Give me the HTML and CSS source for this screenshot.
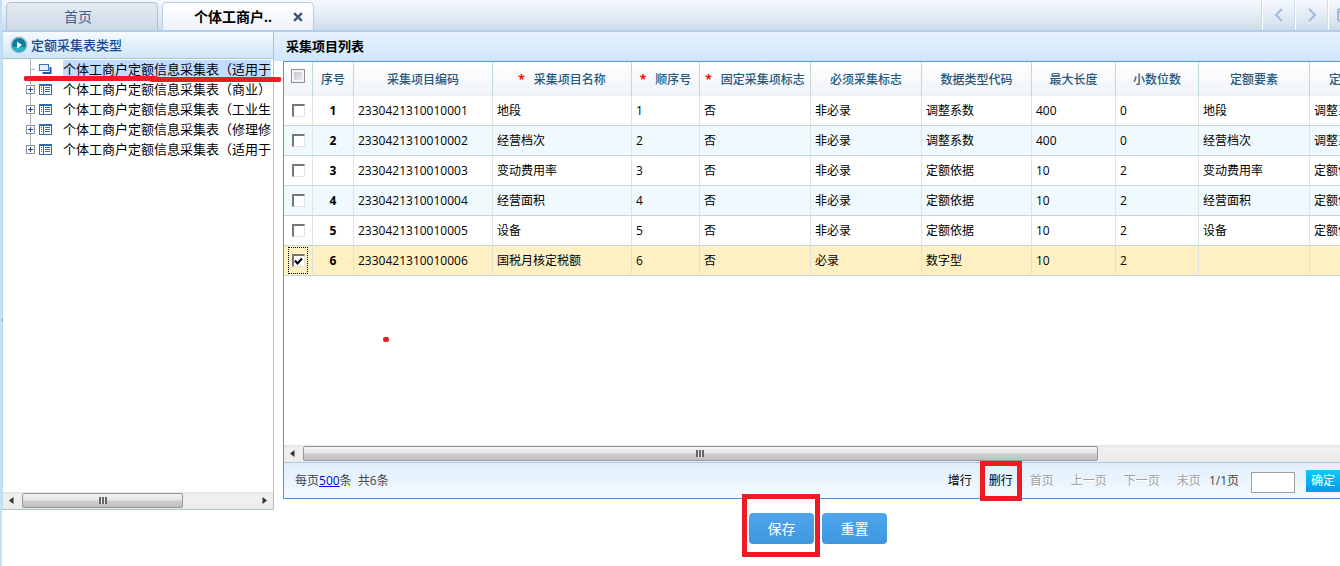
FILE: index.html
```html
<!DOCTYPE html>
<html lang="zh-CN">
<head>
<meta charset="utf-8">
<title>定额采集表</title>
<link rel="stylesheet" href="styles.css">
</head>
<body>
<div class="app">
  <header class="tabbar">
    <nav class="tabs">
      <button class="tab" type="button">首页</button>
      <div class="tab tab-active">
        <span>个体工商户..</span>
        <button class="tab-close" type="button" aria-label="关闭"><svg width="10" height="10" viewBox="0 0 9 9"><path d="M1 1l7 7M8 1l-7 7" stroke="#3a5075" stroke-width="2"/></svg></button>
      </div>
    </nav>
    <div class="tab-nav">
      <button class="nav-btn" type="button" aria-label="向左"><svg width="10" height="14" viewBox="0 0 10 14"><path d="M8 1L2 7l6 6" fill="none" stroke="#98bbdf" stroke-width="2"/></svg></button>
      <button class="nav-btn" type="button" aria-label="向右"><svg width="10" height="14" viewBox="0 0 10 14"><path d="M2 1l6 6-6 6" fill="none" stroke="#98bbdf" stroke-width="2"/></svg></button>
      <button class="nav-btn nav-btn-cut" type="button" aria-label="窗口"><svg width="14" height="14" viewBox="0 0 14 14"><rect x="1" y="1" width="12" height="12" rx="2" fill="none" stroke="#98bbdf" stroke-width="2"/><path d="M1 4h12" stroke="#98bbdf" stroke-width="2"/></svg></button>
    </div>
  </header>

  <div class="workspace">
    <aside class="side">
      <h2 class="side-title">
        <svg width="18" height="18" viewBox="0 0 18 18"><circle cx="9" cy="9" r="8.5" fill="#a9bfcb"/><circle cx="9" cy="9" r="7" fill="#0a7f9e"/><path d="M3 11a6 5 0 0 0 12 0z" fill="#25b4c8"/><path d="M7 5.5v7L12 9z" fill="#fff"/></svg>
        <span>定额采集表类型</span>
      </h2>
      <ul class="tree">
        <li class="node node-first"><span class="elbow"></span><svg class="node-icon" width="13" height="12" viewBox="0 0 13 12"><path d="M3.500 10h8V4" fill="none" stroke="#2457a5" stroke-width="2"/><rect x=".5" y="1.500" width="9" height="6" fill="#e3effc" stroke="#3d72bd"/></svg><span class="node-text selected">个体工商户定额信息采集表（适用于</span></li>
        <li class="node"><svg class="plus" width="9" height="9" viewBox="0 0 9 9"><rect x=".5" y=".5" width="8" height="8" fill="#fff" stroke="#8b929c"/><path d="M2 4.500h5M4.500 2v5" stroke="#29457b"/></svg><svg class="node-icon" width="13" height="11" viewBox="0 0 13 11"><path fill="#2f6cb8" d="M0 0h13v11H0z"/><path fill="#fff" d="M1 2h3v8H1zM5 2h7v8H5z"/><path d="M2 3.500h1M2 5.500h1M2 7.500h1M6 3.500h5M6 5.500h5M6 7.500h5" stroke="#2f6cb8"/></svg><span class="node-text">个体工商户定额信息采集表（商业）</span></li>
        <li class="node"><svg class="plus" width="9" height="9" viewBox="0 0 9 9"><rect x=".5" y=".5" width="8" height="8" fill="#fff" stroke="#8b929c"/><path d="M2 4.500h5M4.500 2v5" stroke="#29457b"/></svg><svg class="node-icon" width="13" height="11" viewBox="0 0 13 11"><path fill="#2f6cb8" d="M0 0h13v11H0z"/><path fill="#fff" d="M1 2h3v8H1zM5 2h7v8H5z"/><path d="M2 3.500h1M2 5.500h1M2 7.500h1M6 3.500h5M6 5.500h5M6 7.500h5" stroke="#2f6cb8"/></svg><span class="node-text">个体工商户定额信息采集表（工业生</span></li>
        <li class="node"><svg class="plus" width="9" height="9" viewBox="0 0 9 9"><rect x=".5" y=".5" width="8" height="8" fill="#fff" stroke="#8b929c"/><path d="M2 4.500h5M4.500 2v5" stroke="#29457b"/></svg><svg class="node-icon" width="13" height="11" viewBox="0 0 13 11"><path fill="#2f6cb8" d="M0 0h13v11H0z"/><path fill="#fff" d="M1 2h3v8H1zM5 2h7v8H5z"/><path d="M2 3.500h1M2 5.500h1M2 7.500h1M6 3.500h5M6 5.500h5M6 7.500h5" stroke="#2f6cb8"/></svg><span class="node-text">个体工商户定额信息采集表（修理修</span></li>
        <li class="node node-last"><svg class="plus" width="9" height="9" viewBox="0 0 9 9"><rect x=".5" y=".5" width="8" height="8" fill="#fff" stroke="#8b929c"/><path d="M2 4.500h5M4.500 2v5" stroke="#29457b"/></svg><svg class="node-icon" width="13" height="11" viewBox="0 0 13 11"><path fill="#2f6cb8" d="M0 0h13v11H0z"/><path fill="#fff" d="M1 2h3v8H1zM5 2h7v8H5z"/><path d="M2 3.500h1M2 5.500h1M2 7.500h1M6 3.500h5M6 5.500h5M6 7.500h5" stroke="#2f6cb8"/></svg><span class="node-text">个体工商户定额信息采集表（适用于</span></li>
      </ul>
      <div class="hscroll">
        <svg class="arrow" width="5" height="7" viewBox="0 0 5 7"><path d="M4.500 0v7L0 3.500z" fill="#333"/></svg>
        <div class="track"><div class="thumb thumb-side"><span class="grip"></span></div></div>
        <svg class="arrow" width="5" height="7" viewBox="0 0 5 7"><path d="M.5 0v7L5 3.500z" fill="#333"/></svg>
      </div>
      <svg class="mark-line" width="257" height="8" viewBox="0 0 257 8"><path d="M2 3.500h130M128 4.500h127" stroke="#ed1c24" stroke-width="5" stroke-linecap="round"/></svg>
    </aside>

    <main class="main">
      <h2 class="main-title">采集项目列表</h2>
      <section class="grid">
        <div class="grid-body">
          <table class="items">
            <colgroup><col class="c-check"><col class="c-no"><col class="c-code"><col class="c-code"><col class="c-order"><col class="c-mid"><col class="c-mid"><col class="c-type"><col class="c-len"><col class="c-dec"><col class="c-mid"><col class="c-mid"></colgroup>
            <thead>
              <tr><th class="pick"><input class="check check-all" type="checkbox" aria-label="全选"></th><th>序号</th><th>采集项目编码</th><th><span class="req">*</span>采集项目名称</th><th><span class="req">*</span>顺序号</th><th><span class="req">*</span>固定采集项标志</th><th>必须采集标志</th><th>数据类型代码</th><th>最大长度</th><th>小数位数</th><th>定额要素</th><th>定额项目类型</th></tr>
            </thead>
            <tbody>
              <tr><td class="pick"><input class="check" type="checkbox" aria-label="选择1"></td><td class="no">1</td><td>2330421310010001</td><td>地段</td><td>1</td><td>否</td><td>非必录</td><td>调整系数</td><td>400</td><td>0</td><td>地段</td><td>调整系数</td></tr>
              <tr><td class="pick"><input class="check" type="checkbox" aria-label="选择2"></td><td class="no">2</td><td>2330421310010002</td><td>经营档次</td><td>2</td><td>否</td><td>非必录</td><td>调整系数</td><td>400</td><td>0</td><td>经营档次</td><td>调整系数</td></tr>
              <tr><td class="pick"><input class="check" type="checkbox" aria-label="选择3"></td><td class="no">3</td><td>2330421310010003</td><td>变动费用率</td><td>3</td><td>否</td><td>非必录</td><td>定额依据</td><td>10</td><td>2</td><td>变动费用率</td><td>定额依据</td></tr>
              <tr><td class="pick"><input class="check" type="checkbox" aria-label="选择4"></td><td class="no">4</td><td>2330421310010004</td><td>经营面积</td><td>4</td><td>否</td><td>非必录</td><td>定额依据</td><td>10</td><td>2</td><td>经营面积</td><td>定额依据</td></tr>
              <tr><td class="pick"><input class="check" type="checkbox" aria-label="选择5"></td><td class="no">5</td><td>2330421310010005</td><td>设备</td><td>5</td><td>否</td><td>非必录</td><td>定额依据</td><td>10</td><td>2</td><td>设备</td><td>定额依据</td></tr>
              <tr class="row-on"><td class="pick"><label class="focus"><input class="check" type="checkbox" checked aria-label="选择6"><svg class="tick" width="9" height="9" viewBox="0 0 9 9"><path d="M1 3.500l2.500 3L8 1.500" fill="none" stroke="#000" stroke-width="2"/></svg></label></td><td class="no">6</td><td>2330421310010006</td><td>国税月核定税额</td><td>6</td><td>否</td><td>必录</td><td>数字型</td><td>10</td><td>2</td><td></td><td></td></tr>
            </tbody>
          </table>
          <span class="mark-dot"></span>
        </div>
        <div class="hscroll">
          <svg class="arrow" width="5" height="7" viewBox="0 0 5 7"><path d="M4.500 0v7L0 3.500z" fill="#333"/></svg>
          <div class="track"><div class="thumb thumb-grid"><span class="grip"></span></div></div>
          <span class="arrow-space"></span>
        </div>
        <footer class="pager">
          <div class="page-info">每页<a href="#">500</a>条&nbsp; 共6条</div>
          <div class="page-tools">
            <button class="tool" type="button">增行</button>
            <span class="marked"><button class="tool" type="button">删行</button><span class="mark-box mark-delete"></span></span>
            <button class="tool" type="button" disabled>首页</button>
            <button class="tool" type="button" disabled>上一页</button>
            <button class="tool" type="button" disabled>下一页</button>
            <button class="tool" type="button" disabled>末页</button>
            <span class="page-count">1/1页</span>
            <input class="page-input" type="text" aria-label="页码">
            <button class="go" type="button">确定</button>
          </div>
        </footer>
      </section>
      <div class="actions">
        <span class="marked"><button class="action" type="button">保存</button><span class="mark-box mark-save"></span></span>
        <button class="action" type="button">重置</button>
      </div>
    </main>
  </div>
  <span class="splitter"></span>
</div>
</body>
</html>
```
FILE: styles.css
```css
* { box-sizing: border-box; }
body {
  margin: 0;
  font: 12px/18px "Open Sans", "Noto Sans CJK SC", sans-serif;
  color: #000;
  background: #fff;
}
button, input { font: inherit; margin: 0; }
button { padding: 0; border: 0; background: none; color: inherit; }
h2 { margin: 0; font-size: 13px; }
svg { display: block; flex: none; }

.app {
  position: relative;
  display: flex;
  flex-direction: column;
  height: 100vh;
  overflow: hidden;
  border-left: 2px solid #c0e0ff;
}

/* tab bar */
.tabbar {
  display: flex;
  justify-content: space-between;
  height: 32px;
  flex: none;
  border-bottom: 2px solid #b0cdec;
  background: linear-gradient(#f4f9fd, #dfe9f2 60%, #cddcec);
}
.tabs { display: flex; gap: 4px; padding: 2px 0 0 4px; }
.tab {
  display: flex;
  align-items: center;
  justify-content: center;
  width: 152px;
  border: 1px solid #b0bfd0;
  border-bottom: 0;
  border-radius: 5px 5px 0 0;
  background: linear-gradient(#e4ebf2, #cedae7);
  color: #3d5f90;
  font-size: 14px;
  line-height: 20px;
}
.tabs > button.tab { padding-right: 8px; }
.tab-active {
  gap: 21px;
  padding-left: 21px;
  border-color: #b5cee8;
  background: linear-gradient(#fff, #eef3f9);
  color: #000;
  font-weight: bold;
}
.tab-nav { display: flex; }
.nav-btn {
  display: flex;
  align-items: center;
  justify-content: center;
  width: 33px;
  border-left: 1px solid #fff;
  box-shadow: -1px 0 #cddae7;
}
.nav-btn-cut { width: 12px; overflow: hidden; justify-content: flex-start; padding-left: 8px; }

.workspace { display: flex; flex: 1; min-height: 0; }

/* form type tree */
.side {
  position: relative;
  display: flex;
  flex-direction: column;
  width: 272px;
  flex: none;
  margin-bottom: 56px;
  border: 1px solid #a5c8c4;
  border-top: 0;
  border-left-color: #c2d9d9;
}
.side-title {
  display: flex;
  align-items: center;
  gap: 3px;
  height: 27px;
  padding-left: 7px;
  border-bottom: 1px solid #a5c8c4;
  background: linear-gradient(#f4fbff, #cfe6f7);
  color: #1a4696;
  font-weight: 500;
}
.tree {
  flex: 1;
  margin: 0;
  padding: 0 0 0 22px;
  list-style: none;
  overflow: hidden;
}
.node {
  display: flex;
  align-items: center;
  height: 20px;
  padding-left: 1px;
  background: linear-gradient(#b0b6c0, #b0b6c0) 5px 0 / 1px 100% no-repeat;
}
.node-last { background-size: 1px 10px; }
.node-icon { margin: 0 11px 0 4px; }
.elbow { width: 5px; height: 1px; margin-left: 4px; background: #b0b6c0; }
.node-text { font-family: "Noto Sans CJK SC", sans-serif; font-size: 13px; white-space: nowrap; }
.selected { background: #c0dcff; }

/* scrollbars */
.hscroll {
  display: flex;
  align-items: center;
  height: 17px;
  flex: none;
  background: linear-gradient(#e3e3e3, #f0f0f0 20%, #ebebeb);
}
.arrow { margin: 0 6px; }
.arrow-space { width: 5px; }
.track { flex: 1; padding-left: 2px; }
.thumb {
  display: flex;
  align-items: center;
  justify-content: center;
  height: 15px;
  border: 1px solid #979797;
  border-radius: 2px;
  background: linear-gradient(#f4f4f4, #e6e6e6 48%, #cfcfcf 52%, #c0c0c2);
}
.thumb-side { width: 69%; }
.thumb-grid { width: 77%; }
.grip { width: 8px; height: 7px; background: repeating-linear-gradient(90deg, #666 0 2px, #eee 2px 3px); }

/* item list */
.main { display: flex; flex-direction: column; flex: 1; min-width: 0; }
.main-title {
  height: 29px;
  flex: none;
  padding-left: 12px;
  line-height: 28px;
  background: linear-gradient(#e6f2fe, #d0e6fd);
}
.grid {
  display: flex;
  flex-direction: column;
  flex: 1;
  min-height: 0;
  margin-left: 9px;
  border: 1px solid #4997d9;
  border-right: 0;
}
.grid-body { position: relative; flex: 1; min-height: 0; overflow: hidden; }
.items { width: 1137px; table-layout: fixed; border-collapse: separate; border-spacing: 0; }
.c-check { width: 29px; }
.c-no { width: 41px; }
.c-code { width: 139px; }
.c-order { width: 68px; }
.c-mid { width: 111px; }
.c-type { width: 110px; }
.c-len { width: 84px; }
.c-dec { width: 83px; }
.items th {
  height: 34px;
  padding: 2px 0 0;
  border-right: 1px solid #c0dad5;
  background: linear-gradient(#fff, #eff3f8);
  color: #25587d;
  font-weight: 500;
  white-space: nowrap;
}
.items td {
  height: 30px;
  padding: 0 4px;
  border-right: 1px solid #d9e6e0;
  border-bottom: 1px solid #c2dad5;
  white-space: nowrap;
}
.items tbody tr:nth-child(even) { background: #f0fafe; }
.items tbody tr.row-on:nth-child(n) { background: #fff0c4; }
.items .pick { padding: 0; }
.items th.pick { padding-bottom: 7px; }
.items .no { text-align: center; font-weight: bold; }
.req { margin-right: 9px; color: #f00; font-weight: bold; }
.check {
  display: block;
  appearance: none;
  width: 13px;
  height: 13px;
  margin: 0 auto;
  border: 1px solid #e3e3e3;
  border-top: 2px solid #777;
  border-left: 2px solid #777;
  background: #fff;
}
.check-all {
  width: 14px;
  height: 14px;
  border: 1px solid #8e8f8f;
  box-shadow: inset 0 0 0 2px #f4f4f4;
  background: linear-gradient(135deg, #bbbfc5, #f0f0f0);
}
.focus {
  position: relative;
  display: flex;
  align-items: center;
  width: 20px;
  height: 27px;
  margin: 0 auto;
  border: 1px dotted #000;
}
.tick { position: absolute; left: 5px; top: 9px; }

.pager {
  display: flex;
  align-items: center;
  justify-content: space-between;
  height: 36px;
  flex: none;
  padding-left: 11px;
  border-top: 1px solid #a8cbea;
  background: linear-gradient(#e0eefa, #f5faff);
  color: #444;
}
.page-info a { color: #00f; }
.page-tools { display: flex; align-items: center; gap: 17px; white-space: nowrap; }
.tool { display: block; color: #000; }
.tool:disabled { color: #a0a0a0; text-shadow: 1px 1px #fff; }
.page-count { margin: 0 -5px 0 -9px; }
.page-input { width: 44px; height: 21px; border: 1px solid #a0a0a0; background: #fff; margin: 3px -6px 0 0; }
.go { width: 34px; height: 22px; background: linear-gradient(#10c8fa, #009cea); color: #fff; }

.actions {
  display: flex;
  justify-content: center;
  gap: 8px;
  height: 67px;
  flex: none;
  padding: 14px 0 0 22px;
}
.action {
  display: block;
  width: 65px;
  height: 31px;
  border-radius: 4px;
  background: linear-gradient(#4fa5ee, #3e97de);
  color: #fff;
  font-size: 14px;
}

/* red pen marks */
.marked { position: relative; }
.mark-box { position: absolute; border: 5px solid #ed1c24; pointer-events: none; }
.mark-delete { inset: -11px -9px; }
.mark-save { inset: -19px -6px auto -7px; height: 63px; }
.mark-line { position: absolute; left: 21px; top: 43px; z-index: 1; }
.mark-dot {
  position: absolute;
  left: 99px;
  top: 275px;
  width: 6px;
  height: 5px;
  border-radius: 2px;
  background: #ed1c24;
}
.splitter {
  position: absolute;
  left: -2px;
  top: 317px;
  border: 3px solid transparent;
  border-left-color: #345;
  border-right: 0;
}
```
